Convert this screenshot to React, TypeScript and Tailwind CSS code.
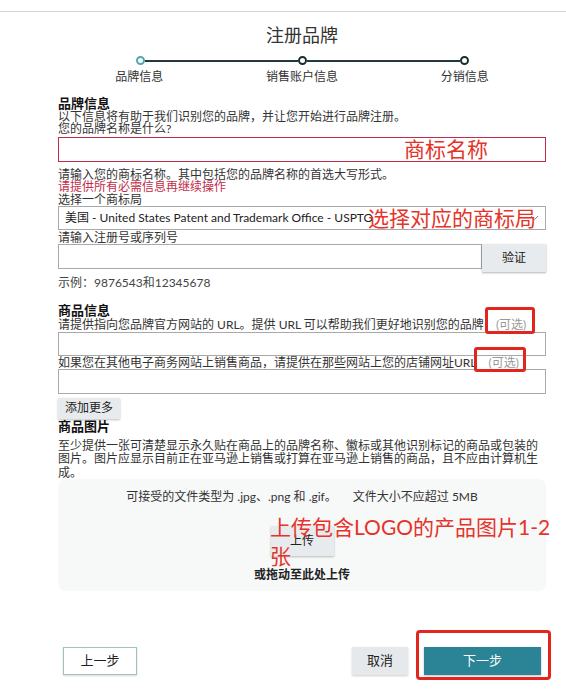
import React from 'react';

const steps = ['品牌信息', '销售账户信息', '分销信息'];

const Stepper: React.FC = () => (
    <div>
        <div className="mt-[9px] flex h-[9px] items-center pl-[78px] pr-[77px]">
            <span className="h-[9px] w-[9px] shrink-0 rounded-full border-2 border-[#4fa7b0] bg-white" />
            <span className="h-[2px] flex-1 bg-[#24393f]" />
            <span className="h-[9px] w-[9px] shrink-0 rounded-full border-2 border-[#1c2c31] bg-white" />
            <span className="h-[2px] flex-1 bg-[#24393f]" />
            <span className="h-[9px] w-[9px] shrink-0 rounded-full border-2 border-[#1c2c31] bg-white" />
        </div>
        <div className="mt-[5px] grid grid-cols-3 text-center text-[12px] leading-[14px] text-[#333]">
            {steps.map((step) => (
                <span key={step}>{step}</span>
            ))}
        </div>
    </div>
);

const Optional: React.FC<{ box: string }> = ({ box }) => (
    <span className="relative ml-[12px] text-[#999]">
        (可选)
        <span className={`absolute rounded-[3px] border-[3px] border-[#e2261d] ${box}`} />
    </span>
);

const App: React.FC = () => {
    return (
        <div className="min-h-[698px] w-[566px] bg-white font-['Lato','Noto_Sans_CJK_SC',sans-serif] text-[#333]">
            <div className="h-[12px] border-b border-[#d6d6d6]" />
            <div className="ml-[58px] w-[488px]">
                <h1 className="mt-[11px] text-center text-[18px] leading-[24px] font-normal text-[#333]">注册品牌</h1>
                <Stepper />

                {/* brand info */}
                <h2 className="mt-[12px] text-[13px] leading-[14px] font-bold text-[#111]">品牌信息</h2>
                <p className="mt-[1px] text-[12px] leading-[12px]">以下信息将有助于我们识别您的品牌，并让您开始进行品牌注册。</p>
                <p className="text-[12px] leading-[12px]">您的品牌名称是什么?</p>
                <div className="relative mt-[2px] h-[25px] border border-[#c12c4a] bg-white">
                    <span className="absolute left-[345px] top-[-1px] text-[21px] leading-[24px] text-[#e5332a]">商标名称</span>
                </div>
                <p className="mt-[6px] text-[12px] leading-[13px]">请输入您的商标名称。其中包括您的品牌名称的首选大写形式。</p>
                <p className="text-[12px] leading-[12.5px] text-[#c12c4a]">请提供所有必需信息再继续操作</p>
                <p className="text-[12px] leading-[12.5px]">选择一个商标局</p>
                <div className="relative flex h-[24px] items-center justify-between border border-[#a9a9a9] bg-white pl-[6px] pr-[6px]">
                    <span className="text-[12px] text-[#222]">美国 - United States Patent and Trademark Office - USPTO</span>
                    <svg width="9" height="6" viewBox="0 0 9 6" className="text-[#888]">
                        <path d="M1 1l3.5 3.5L8 1" fill="none" stroke="currentColor" strokeWidth="1" />
                    </svg>
                    <span className="absolute left-[309px] top-[-1px] text-[21px] leading-[24px] text-[#e5332a]">选择对应的商标局</span>
                </div>
                <p className="mt-[2px] text-[12px] leading-[12px]">请输入注册号或序列号</p>
                <div className="flex h-[28px] items-start">
                    <div className="h-[25px] flex-1 border border-[#a9a9a9] bg-white" />
                    <button className="h-[28px] w-[64px] shrink-0 bg-[#e8ebed] text-[12px] text-[#222] shadow-[0_1px_2px_rgba(0,0,0,0.3)]">
                        验证
                    </button>
                </div>
                <p className="mt-[4px] text-[12px] leading-[13px] text-[#444]">示例：9876543和12345678</p>

                {/* product info */}
                <h2 className="mt-[14px] text-[13px] leading-[14px] font-bold text-[#111]">商品信息</h2>
                <p className="mt-[2px] text-[12px] leading-[12px]">
                    请提供指向您品牌官方网站的 URL。提供 URL 可以帮助我们更好地识别您的品牌
                    <Optional box="left-[-11px] right-[-9px] top-[-10px] bottom-[-2px]" />
                </p>
                <div className="mt-[1px] h-[24px] border border-[#a9a9a9] bg-white" />
                <p className="mt-[1px] text-[12px] leading-[12px]">
                    如果您在其他电子商务网站上销售商品，请提供在那些网站上您的店铺网址URL
                    <Optional box="left-[-15px] right-[-7px] top-[-8px] bottom-[-2px]" />
                </p>
                <div className="h-[25px] border border-[#a9a9a9] bg-white" />
                <button className="mt-[1px] h-[21px] w-[62px] bg-[#e8ebed] text-[12px] text-[#222] shadow-[0_1px_2px_rgba(0,0,0,0.25)]">
                    添加更多
                </button>
                <h2 className="text-[13px] leading-[14px] font-bold text-[#111]">商品图片</h2>
                <p className="mt-[6px] text-[12px] leading-[13.5px]">
                    至少提供一张可清楚显示永久贴在商品上的品牌名称、徽标或其他识别标记的商品或包装的图片。图片应显示目前正在亚马逊上销售或打算在亚马逊上销售的商品，且不应由计算机生成。
                </p>

                {/* upload */}
                <div className="relative flex flex-col items-center rounded-[8px] bg-[#f7f8f8] pb-[9px] pt-[11px]">
                    <p className="text-[12px] leading-[14px] text-[#333]">
                        可接受的文件类型为 .jpg、.png 和 .gif。
                        <span className="ml-[16px]">文件大小不应超过 5MB</span>
                    </p>
                    <button className="mt-[22px] h-[30px] w-[63px] bg-[#e8ebed] text-[12px] text-[#222] shadow-[0_1px_2px_rgba(0,0,0,0.25)]">
                        上传
                    </button>
                    <p className="mt-[12px] text-[12px] leading-[14px] font-bold text-[#222]">或拖动至此处上传</p>
                    <span className="absolute left-[212px] top-[33px] whitespace-nowrap text-[21px] leading-[29px] text-[#e5332a]">
                        上传包含LOGO的产品图片1-2
                        <br />张
                    </span>
                </div>

                {/* footer */}
                <div className="mt-[56px] flex items-center justify-between px-[5px]">
                    <button className="h-[28px] w-[74px] border border-[#9ec3c3] bg-white text-[13px] text-[#222] shadow-[0_1px_2px_rgba(0,0,0,0.15)]">
                        上一步
                    </button>
                    <div className="flex items-center gap-[16px]">
                        <button className="h-[28px] w-[56px] bg-[#e6e9eb] text-[13px] text-[#222] shadow-[0_1px_2px_rgba(0,0,0,0.2)]">
                            取消
                        </button>
                        <div className="relative">
                            <button className="h-[28px] w-[117px] bg-[#2a8496] text-[13px] text-white shadow-[0_1px_2px_rgba(0,0,0,0.25)]">
                                下一步
                            </button>
                            <span className="absolute bottom-[-5px] left-[-8px] right-[-10px] top-[-17px] rounded-[4px] border-[3px] border-[#e2261d]" />
                        </div>
                    </div>
                </div>
            </div>
        </div>
    );
};

export default App;
